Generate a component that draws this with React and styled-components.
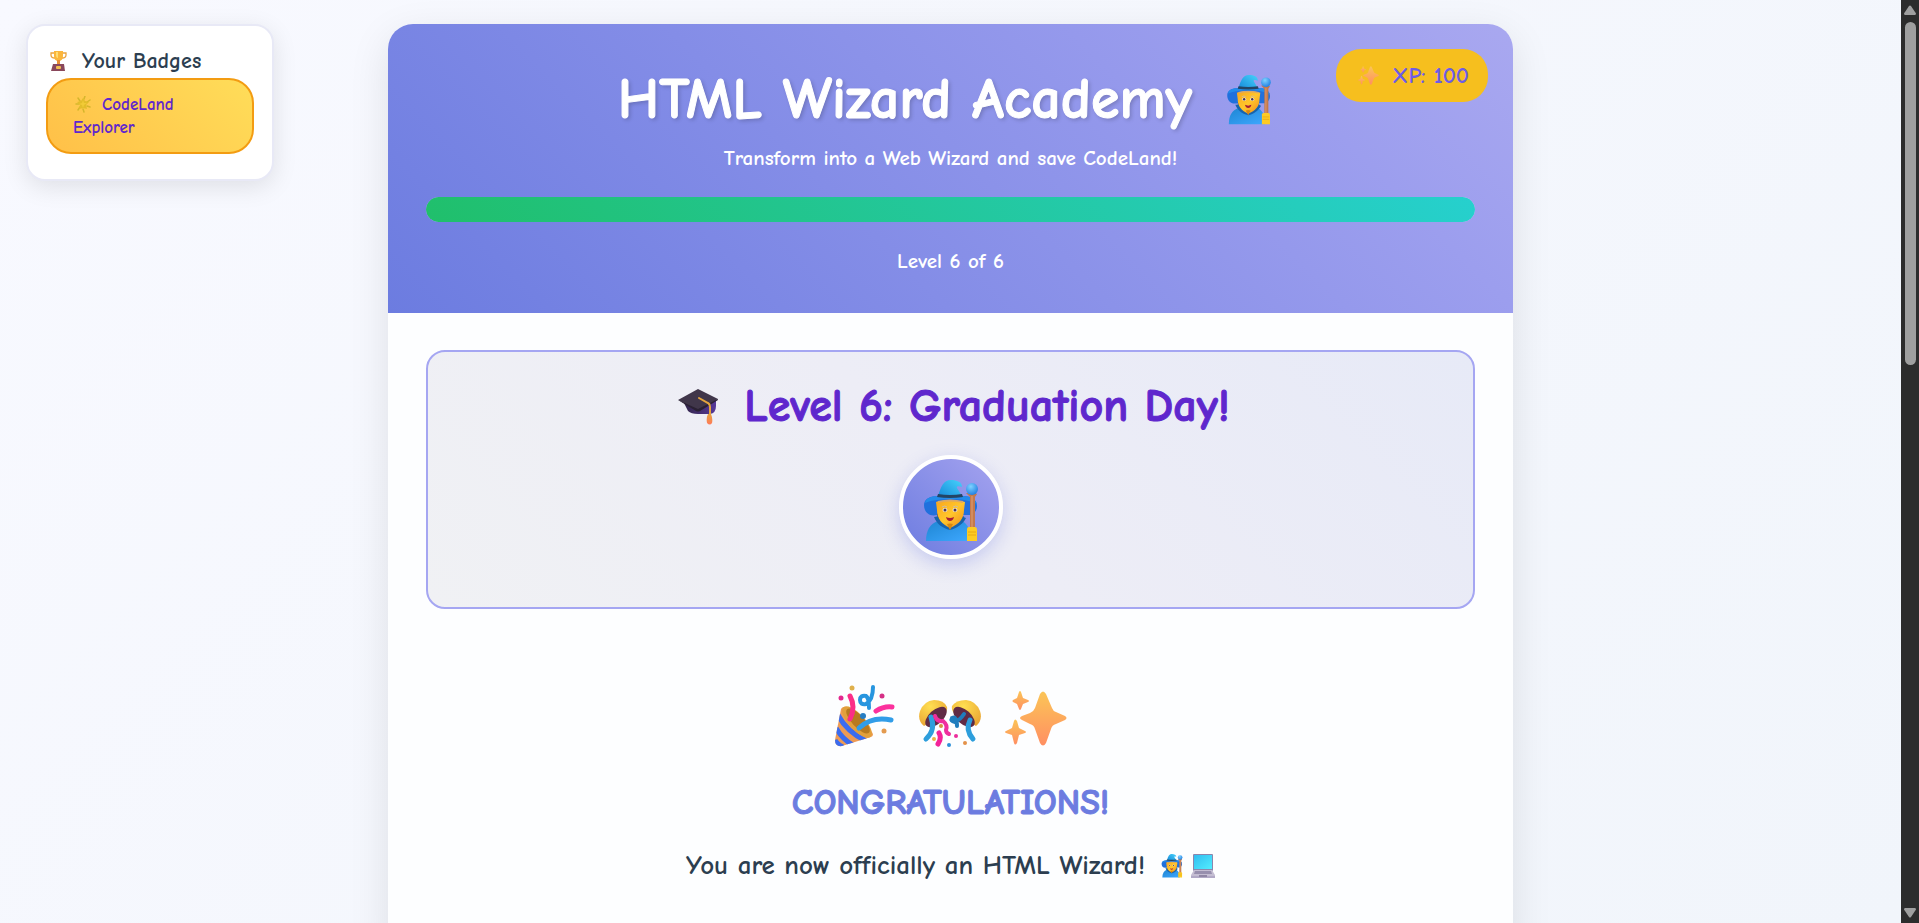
import React from "react";
import styled, { createGlobalStyle } from "styled-components";

const GlobalStyle = createGlobalStyle`
  *, *::before, *::after { box-sizing: border-box; }
  body {
    margin: 0;
    font-family: "Comic Sans MS", "Comic Neue", "Open Sans", sans-serif;
    color: #2c3e50;
  }
  h1, h2, h3, p, ul { margin: 0; padding: 0; }
`;

const Shell = styled.div`
  display: grid;
  grid-template-columns: minmax(0, 1fr) 18px;
  height: 100vh;
  overflow: hidden;
`;

const Page = styled.div`
  display: grid;
  grid-template-columns: minmax(0, 1fr) minmax(0, 1125px) minmax(0, 1fr);
  padding-top: 24px;
  overflow: hidden;
  background: linear-gradient(135deg, #f8f9ff 0%, #f1f5fb 100%);
`;

const BadgePanel = styled.aside`
  align-self: start;
  width: 248px;
  max-width: calc(100% - 26px);
  margin-left: 26px;
  padding: 18px 18px 25px;
  background: #fff;
  border: 2px solid #e8e9f6;
  border-radius: 19px;
  box-shadow: 0 6px 24px rgba(0, 0, 0, 0.1);
`;

const PanelTitle = styled.h3`
  display: flex;
  align-items: center;
  gap: 15px;
  padding-left: 4px;
  font-size: 22px;
  line-height: 34px;
  font-weight: 700;
`;

const BadgeList = styled.ul`
  list-style: none;
`;

const Badge = styled.li`
  padding: 13px 25px;
  border: 2px solid #f39c12;
  border-radius: 25px;
  background: linear-gradient(45deg, #ffc048, #ffdd59);
  color: #5f27cd;
  font-size: 17px;
  line-height: 23px;
  font-weight: 700;

  svg { margin: 0 11px 0 2px; vertical-align: -3px; }
`;

const Card = styled.main`
  grid-column: 2;
  min-height: 100vh;
  background: #fdfeff;
  border-radius: 25px 25px 0 0;
  box-shadow: 0 12px 40px rgba(0, 0, 0, 0.1);
`;

const Header = styled.header`
  position: relative;
  padding: 38px 38px 35px;
  border-radius: 25px 25px 0 0;
  background: linear-gradient(45deg, #6c7ce0, #9c9eee 80%, #a9a8f0);
  color: #fff;
  text-align: center;
`;

const Title = styled.h1`
  display: flex;
  justify-content: center;
  align-items: center;
  gap: 35px;
  padding-right: 12px;
  font-size: 58px;
  line-height: 75px;
  font-weight: 700;
  text-shadow: 2px 2px 4px rgba(0, 0, 0, 0.2);
  -webkit-text-stroke: 1px currentColor;
`;

const HeaderText = styled.p`
  margin-top: ${(p) => p.$gap}px;
  font-size: 21px;
  line-height: 34px;
  font-weight: 700;
`;

const Progress = styled.div`
  height: 25px;
  margin-top: 22px;
  overflow: hidden;
  border-radius: 13px;
  background: rgba(255, 255, 255, 0.3);
`;

const ProgressFill = styled.div`
  height: 100%;
  border-radius: 13px;
  background: linear-gradient(45deg, #20bf6b, #26d0ce);
`;

const XpBadge = styled.div`
  position: absolute;
  top: 25px;
  right: 25px;
  display: flex;
  align-items: center;
  gap: 13px;
  padding: 9px 19px 9px 22px;
  border-radius: 25px;
  background: #f6bf1e;
  color: #6c5ce7;
  font-size: 23px;
  line-height: 35px;
  font-weight: 700;
`;

const Content = styled.div`
  padding: 37px 38px;
`;

const LevelCard = styled.section`
  display: flex;
  flex-direction: column;
  align-items: center;
  padding: 25px 25px 48px;
  border: 2px solid #a5a6f2;
  border-radius: 19px;
  background: linear-gradient(45deg, #f0f1f4, #ededf6 50%, #e7eaf7);
`;

const LevelTitle = styled.h2`
  display: flex;
  align-items: center;
  gap: 25px;
  padding-left: 7px;
  color: #5f27cd;
  font-size: 46px;
  line-height: 60px;
  font-weight: 700;
  -webkit-text-stroke: 1px currentColor;
`;

const Avatar = styled.div`
  display: grid;
  place-items: center;
  width: 104px;
  height: 104px;
  margin-top: 18px;
  padding-top: 8px;
  border: 4px solid #fff;
  border-radius: 50%;
  background: linear-gradient(45deg, #6c7ce0, #a5a3ef);
  box-shadow: 0 6px 18px rgba(108, 124, 224, 0.3);
`;

const Celebration = styled.section`
  padding-top: 76px;
  text-align: center;
`;

const EmojiRow = styled.div`
  display: flex;
  justify-content: center;
  align-items: flex-end;
  gap: 24px;
`;

const Congrats = styled.h2`
  margin-top: 32px;
  color: #6c7ce0;
  font-size: 36px;
  line-height: 48px;
  font-weight: 700;
  -webkit-text-stroke: 1px currentColor;
`;

const Statement = styled.p`
  display: flex;
  justify-content: center;
  align-items: center;
  gap: 8px;
  margin-top: 19px;
  font-size: 27px;
  line-height: 40px;
  font-weight: 700;

  span { margin-right: 8px; }
`;

const Scrollbar = styled.div`
  display: flex;
  flex-direction: column;
  align-items: center;
  gap: 7px;
  padding: 5px 0;
  background: #2c2c2c;
`;

const Track = styled.div`
  flex: 1;
  width: 11px;
`;

const Thumb = styled.div`
  height: 39%;
  border-radius: 6px;
  background: #9f9f9f;
`;

function Wizard({ width, height }) {
  return (
    <svg width={width} height={height} viewBox="0 0 54 62" aria-hidden="true">
      <defs>
        <linearGradient id="wzHat" x1="0" y1="1" x2="1" y2="0">
          <stop offset="0" stopColor="#1587d8" />
          <stop offset="1" stopColor="#46d2fb" />
        </linearGradient>
        <linearGradient id="wzFace" x1="0" y1="0" x2="1" y2="1">
          <stop offset="0" stopColor="#f9a51d" />
          <stop offset="0.5" stopColor="#ffc62b" />
          <stop offset="1" stopColor="#f08a1c" />
        </linearGradient>
        <linearGradient id="wzRobe" x1="0" y1="0" x2="1" y2="1">
          <stop offset="0" stopColor="#1e86d3" />
          <stop offset="1" stopColor="#3ea8ff" />
        </linearGradient>
        <radialGradient id="wzOrb" cx="0.4" cy="0.3" r="0.8">
          <stop offset="0" stopColor="#7fd2ff" />
          <stop offset="1" stopColor="#1677e0" />
        </radialGradient>
      </defs>
      <path d="M2 61c0-11 4-17 12-20h24c6 3 9 10 9 20z" fill="url(#wzRobe)" />
      <path d="M0 25c0-6 6-9 14-9h26c8 0 13 4 13 10 0 5-3 8-6 9H13C5 37 0 32 0 25z" fill="#2070dd" />
      <path d="M10 37c5 0 6-3 6-3h22s2 4 4 4c-3 6-9 10-16 12-8-2-13-6-16-13z" fill="#1763ad" />
      <path d="M13 35c4 8 9 10 13 13 5-3 9-6 13-13l-2-6H15z" fill="#263c60" />
      <path d="M12 22c4-2 24-2 29 0l-1 8c0 9-5 14-14 18-8-4-13-9-13-18z" fill="url(#wzFace)" />
      <path d="M14 22q12-3 25 0" stroke="#dba865" strokeWidth="2" fill="none" />
      <path d="M18 27q3-2 5 0M29 27q3-2 5 0" stroke="#cfbda3" strokeWidth="1" fill="none" />
      <ellipse cx="21" cy="30" rx="2.5" ry="2" fill="#f4eadc" />
      <ellipse cx="31" cy="30" rx="2.5" ry="2" fill="#f4eadc" />
      <circle cx="21" cy="30" r="1.5" fill="#4d3550" />
      <circle cx="31" cy="30" r="1.5" fill="#4d3550" />
      <path d="M22 37q4 2 8 0-1 4-4 4t-4-4z" fill="#a91d33" />
      <path d="M23 44q3-1 6 0l-3 6z" fill="#d68812" />
      <path d="M1 23c1-5 6-7 14-7h24c8 0 13 4 14 8-8-4-17-5-26-5S8 20 1 23z" fill="#238bea" />
      <path d="M14 16C17 7 19 0 27 0c6 0 11 2 11 7-3-1-6-1-5 1l5 8q-12 4-24 0z" fill="url(#wzHat)" />
      <path d="M14 14q12 2 24 0l1 3q-13 2-26 0z" fill="#244464" />
      <path d="M42 13l4 4v37h5V17l2-3-2-1H45z" fill="#c4794b" />
      <path d="M48 16v32" stroke="#e2a071" strokeWidth="1" />
      <circle cx="48" cy="9" r="6" fill="url(#wzOrb)" />
      <path d="M43 49q0-2 2-2h6q2 0 2 3v11H43z" fill="#fdcb24" />
      <path d="M44 52h8M44 55h8" stroke="#e8a915" strokeWidth="1" />
    </svg>
  );
}

function Sparkles({ width, height }) {
  return (
    <svg width={width} height={height} viewBox="0 0 62 55" aria-hidden="true">
      <defs>
        <linearGradient id="spark" x1="0" y1="0" x2="0" y2="1">
          <stop offset="0" stopColor="#fbc557" />
          <stop offset="1" stopColor="#ff8f62" />
        </linearGradient>
      </defs>
      <g fill="url(#spark)">
        <path d="M35 3q3-5 6 0l6 14q1 3 4 4l9 4q3 2 0 4l-9 4q-4 1-5 5l-5 14q-3 5-6 0l-5-14q-1-4-5-5l-8-4q-4-2 0-4l8-3q4-2 5-5z" />
        <path d="M14 1q1-2 2 0l2 6 5 2q2 1 0 2l-5 2-2 5q-1 2-2 0l-2-5-4-2q-1-1 0-2l4-2z" />
        <path d="M9 30q1-3 3 0l2 7 6 3q2 1 0 2l-6 2-2 8q-2 3-3 0l-2-8-6-2q-2-1 0-2l6-3z" />
      </g>
    </svg>
  );
}

function Trophy() {
  return (
    <svg width="17" height="20" viewBox="0 0 17 20" aria-hidden="true">
      <path d="M4 2H1v2q0 3 4 3M13 2h3v2q0 3-4 3" fill="none" stroke="#eba33c" strokeWidth="1.3" />
      <path d="M4 0h9v5q0 5-4.500 5T4 5z" fill="#fbb63b" />
      <path d="M6 1h2v6Q6 7 6 4z" fill="#ffdc74" />
      <path d="M7 9h3v5H7z" fill="#e98e36" />
      <path d="M3 13h11l1 7H1z" fill="#89475b" />
      <rect x="6" y="15" width="5" height="3" rx="1" fill="#f3bd50" />
    </svg>
  );
}

function GlowingStar() {
  return (
    <svg width="16" height="17" viewBox="0 0 16 17" aria-hidden="true">
      <path d="M3 2l2 3M10 0l-1 3M15 4l-3 2M1 8h3M15 11l-3-1M9 16l-1-3M3 14l2-3" stroke="#d5b62c" strokeWidth="1.500" strokeLinecap="round" />
      <path d="M8 2l2 3 4 1-3 3 1 4-4-1-4 1 1-4-3-3 4-1z" fill="#e3bd2a" />
      <path d="M8 4l1 3 3 0-3 2-1 3-1-3-3-1 3-1z" fill="#f1cb37" />
    </svg>
  );
}

function GraduationCap() {
  return (
    <svg width="41" height="36" viewBox="0 0 41 36" aria-hidden="true">
      <defs>
        <linearGradient id="capBase" x1="0" y1="0" x2="1" y2="0">
          <stop offset="0" stopColor="#302446" />
          <stop offset="1" stopColor="#57399a" />
        </linearGradient>
        <linearGradient id="capTassel" x1="0" y1="0" x2="0" y2="1">
          <stop offset="0" stopColor="#e5a23d" />
          <stop offset="1" stopColor="#ff7a5b" />
        </linearGradient>
      </defs>
      <path d="M5 12l5 10q3 3 10 3h12q6-1 6-8V11z" fill="url(#capBase)" />
      <path d="M0 11L20 0l20 10-18 11q-1 1-3 0z" fill="#40364a" />
      <path d="M0 11l20 9 20-10v1L22 22q-2 1-4 0z" fill="#2a2133" />
      <path d="M21 9l9 5q2 1 2 4v9" fill="none" stroke="#e5a53d" strokeWidth="2" strokeLinecap="round" />
      <path d="M30 25h3q2 5 1 9-2 3-5 0-1-5 1-9z" fill="url(#capTassel)" />
    </svg>
  );
}

function PartyPopper() {
  return (
    <svg width="60" height="62" viewBox="0 0 60 62" aria-hidden="true">
      <defs>
        <clipPath id="popCone">
          <path d="M6 24Q8 20 14 24L36 46q4 4 0 6L7 61q-7 1-7-6z" />
        </clipPath>
      </defs>
      <path d="M6 24Q8 20 14 24L36 46q4 4 0 6L7 61q-7 1-7-6z" fill="#ee9b55" />
      <g clipPath="url(#popCone)" fill="none" stroke="#3b6cf0" strokeWidth="5">
        <path d="M3 30q9 17 28 26M1 43q6 11 18 18M0 55q2 4 8 7" />
      </g>
      <ellipse cx="22" cy="37" rx="20" ry="8" transform="rotate(47 22 37)" fill="#e2a03c" />
      <ellipse cx="23" cy="36" rx="16" ry="6" transform="rotate(47 23 36)" fill="#b87a20" />
      <path d="M15 11q6 11 0 23" fill="none" stroke="#fb2e87" strokeWidth="5" strokeLinecap="round" />
      <path d="M24 43q13-12 32-8" fill="none" stroke="#319de8" strokeWidth="5" strokeLinecap="round" />
      <path d="M38 2q0 13-7 17-6 1-6-4t6-4q3 2 3 12" fill="none" stroke="#2795df" strokeWidth="4" strokeLinecap="round" />
      <path d="M41 26q8-5 16-4" fill="none" stroke="#fb319d" strokeWidth="5" strokeLinecap="round" />
      <circle cx="17" cy="3" r="2.500" fill="#dfb04c" />
      <circle cx="6" cy="13" r="2.500" fill="#e4288e" />
      <circle cx="47" cy="11" r="2.500" fill="#d52f86" />
      <circle cx="28" cy="31" r="3" fill="#277ec4" />
      <circle cx="49" cy="46" r="2.500" fill="#e39b50" />
    </svg>
  );
}

function ConfettiBall() {
  return (
    <svg width="62" height="47" viewBox="0 0 62 47" aria-hidden="true">
      <defs>
        <radialGradient id="ballGold" cx="0.4" cy="0.25" r="0.8">
          <stop offset="0" stopColor="#ffdf51" />
          <stop offset="1" stopColor="#e9a534" />
        </radialGradient>
      </defs>
      <path d="M5 26Q-2 20 1 11 5 1 15 0q10 0 13 7 1 4-4 8z" fill="url(#ballGold)" />
      <path d="M57 26q7-6 4-15Q57 1 47 0 37 0 33 6q-1 5 4 9z" fill="url(#ballGold)" />
      <ellipse cx="17" cy="17" rx="13" ry="7" transform="rotate(-42 17 17)" fill="#602b45" />
      <ellipse cx="45" cy="17" rx="13" ry="7" transform="rotate(42 45 17)" fill="#602b45" />
      <path d="M12 17q5 13-5 22" fill="none" stroke="#2d9edc" strokeWidth="5" strokeLinecap="round" />
      <path d="M16 16q2 6 8 5 5 4 3 9 0 3 3 4" fill="none" stroke="#ef2e9e" strokeWidth="4" strokeLinecap="round" />
      <path d="M45 14q-4 6-9 8-5-1-3-4 5-2 5 8" fill="none" stroke="#207dbd" strokeWidth="4" strokeLinecap="round" />
      <path d="M51 20q-5 10 3 19" fill="none" stroke="#2d9edc" strokeWidth="5" strokeLinecap="round" />
      <path d="M20 33q3 5-1 11" fill="none" stroke="#f32399" strokeWidth="5" strokeLinecap="round" />
      <circle cx="37" cy="36" r="2" fill="#ed2d9c" />
      <circle cx="30" cy="45" r="2" fill="#2d91d8" />
      <circle cx="46" cy="43" r="2" fill="#e3924a" />
      <circle cx="22" cy="26" r="2" fill="#d39542" />
      <circle cx="15" cy="39" r="2" fill="#edb344" />
    </svg>
  );
}

function Laptop() {
  return (
    <svg width="24" height="24" viewBox="0 0 24 24" aria-hidden="true">
      <defs>
        <linearGradient id="lapScreen" x1="0" y1="0" x2="1" y2="1">
          <stop offset="0" stopColor="#31bdf0" />
          <stop offset="1" stopColor="#52edff" />
        </linearGradient>
      </defs>
      <rect x="2" y="0" width="20" height="17" rx="1" fill="#8b86ad" />
      <rect x="3" y="1" width="18" height="14" fill="url(#lapScreen)" />
      <path d="M3 16h18l3 5v3H0v-3z" fill="#c4bdd2" />
      <path d="M4 17h16l1 3H3z" fill="#978fae" />
      <path d="M0 22h24v2H0z" fill="#b1a9c6" />
      <path d="M8 21h8v2H8z" fill="#8f86a5" />
    </svg>
  );
}

function Arrow({ down }) {
  return (
    <svg width="12" height="10" viewBox="0 0 12 10" aria-hidden="true">
      <path
        d={down ? "M1 0h10q2 1 0 3L7 9q-1 1-2 0L1 3q-2-2 0-3z" : "M1 10h10q2-1 0-3L7 1Q6 0 5 1L1 7q-2 2 0 3z"}
        fill="#9f9f9f"
      />
    </svg>
  );
}

export default function App() {
  const level = 6;
  const levels = 6;
  return (
    <>
      <GlobalStyle />
      <Shell>
        <Page>
          <BadgePanel>
            <PanelTitle><Trophy />Your Badges</PanelTitle>
            <BadgeList>
              <Badge><GlowingStar />CodeLand Explorer</Badge>
            </BadgeList>
          </BadgePanel>
          <Card>
            <Header>
              <XpBadge><Sparkles width={21} height={19} />XP: 100</XpBadge>
              <Title>HTML Wizard Academy<Wizard width={44} height={50} /></Title>
              <HeaderText $gap={4}>Transform into a Web Wizard and save CodeLand!</HeaderText>
              <Progress role="progressbar" aria-label="Level progress" aria-valuenow={level} aria-valuemin={0} aria-valuemax={levels}>
                <ProgressFill style={{ width: `${(level / levels) * 100}%` }} />
              </Progress>
              <HeaderText $gap={22}>Level {level} of {levels}</HeaderText>
            </Header>
            <Content>
              <LevelCard>
                <LevelTitle><GraduationCap />Level 6: Graduation Day!</LevelTitle>
                <Avatar><Wizard width={54} height={62} /></Avatar>
              </LevelCard>
              <Celebration>
                <EmojiRow>
                  <PartyPopper />
                  <ConfettiBall />
                  <Sparkles width={62} height={57} />
                </EmojiRow>
                <Congrats>CONGRATULATIONS!</Congrats>
                <Statement>
                  <span>You are now officially an HTML Wizard!</span>
                  <Wizard width={22} height={24} />
                  <Laptop />
                </Statement>
              </Celebration>
            </Content>
          </Card>
        </Page>
        <Scrollbar aria-hidden="true">
          <Arrow />
          <Track><Thumb /></Track>
          <Arrow down />
        </Scrollbar>
      </Shell>
    </>
  );
}
